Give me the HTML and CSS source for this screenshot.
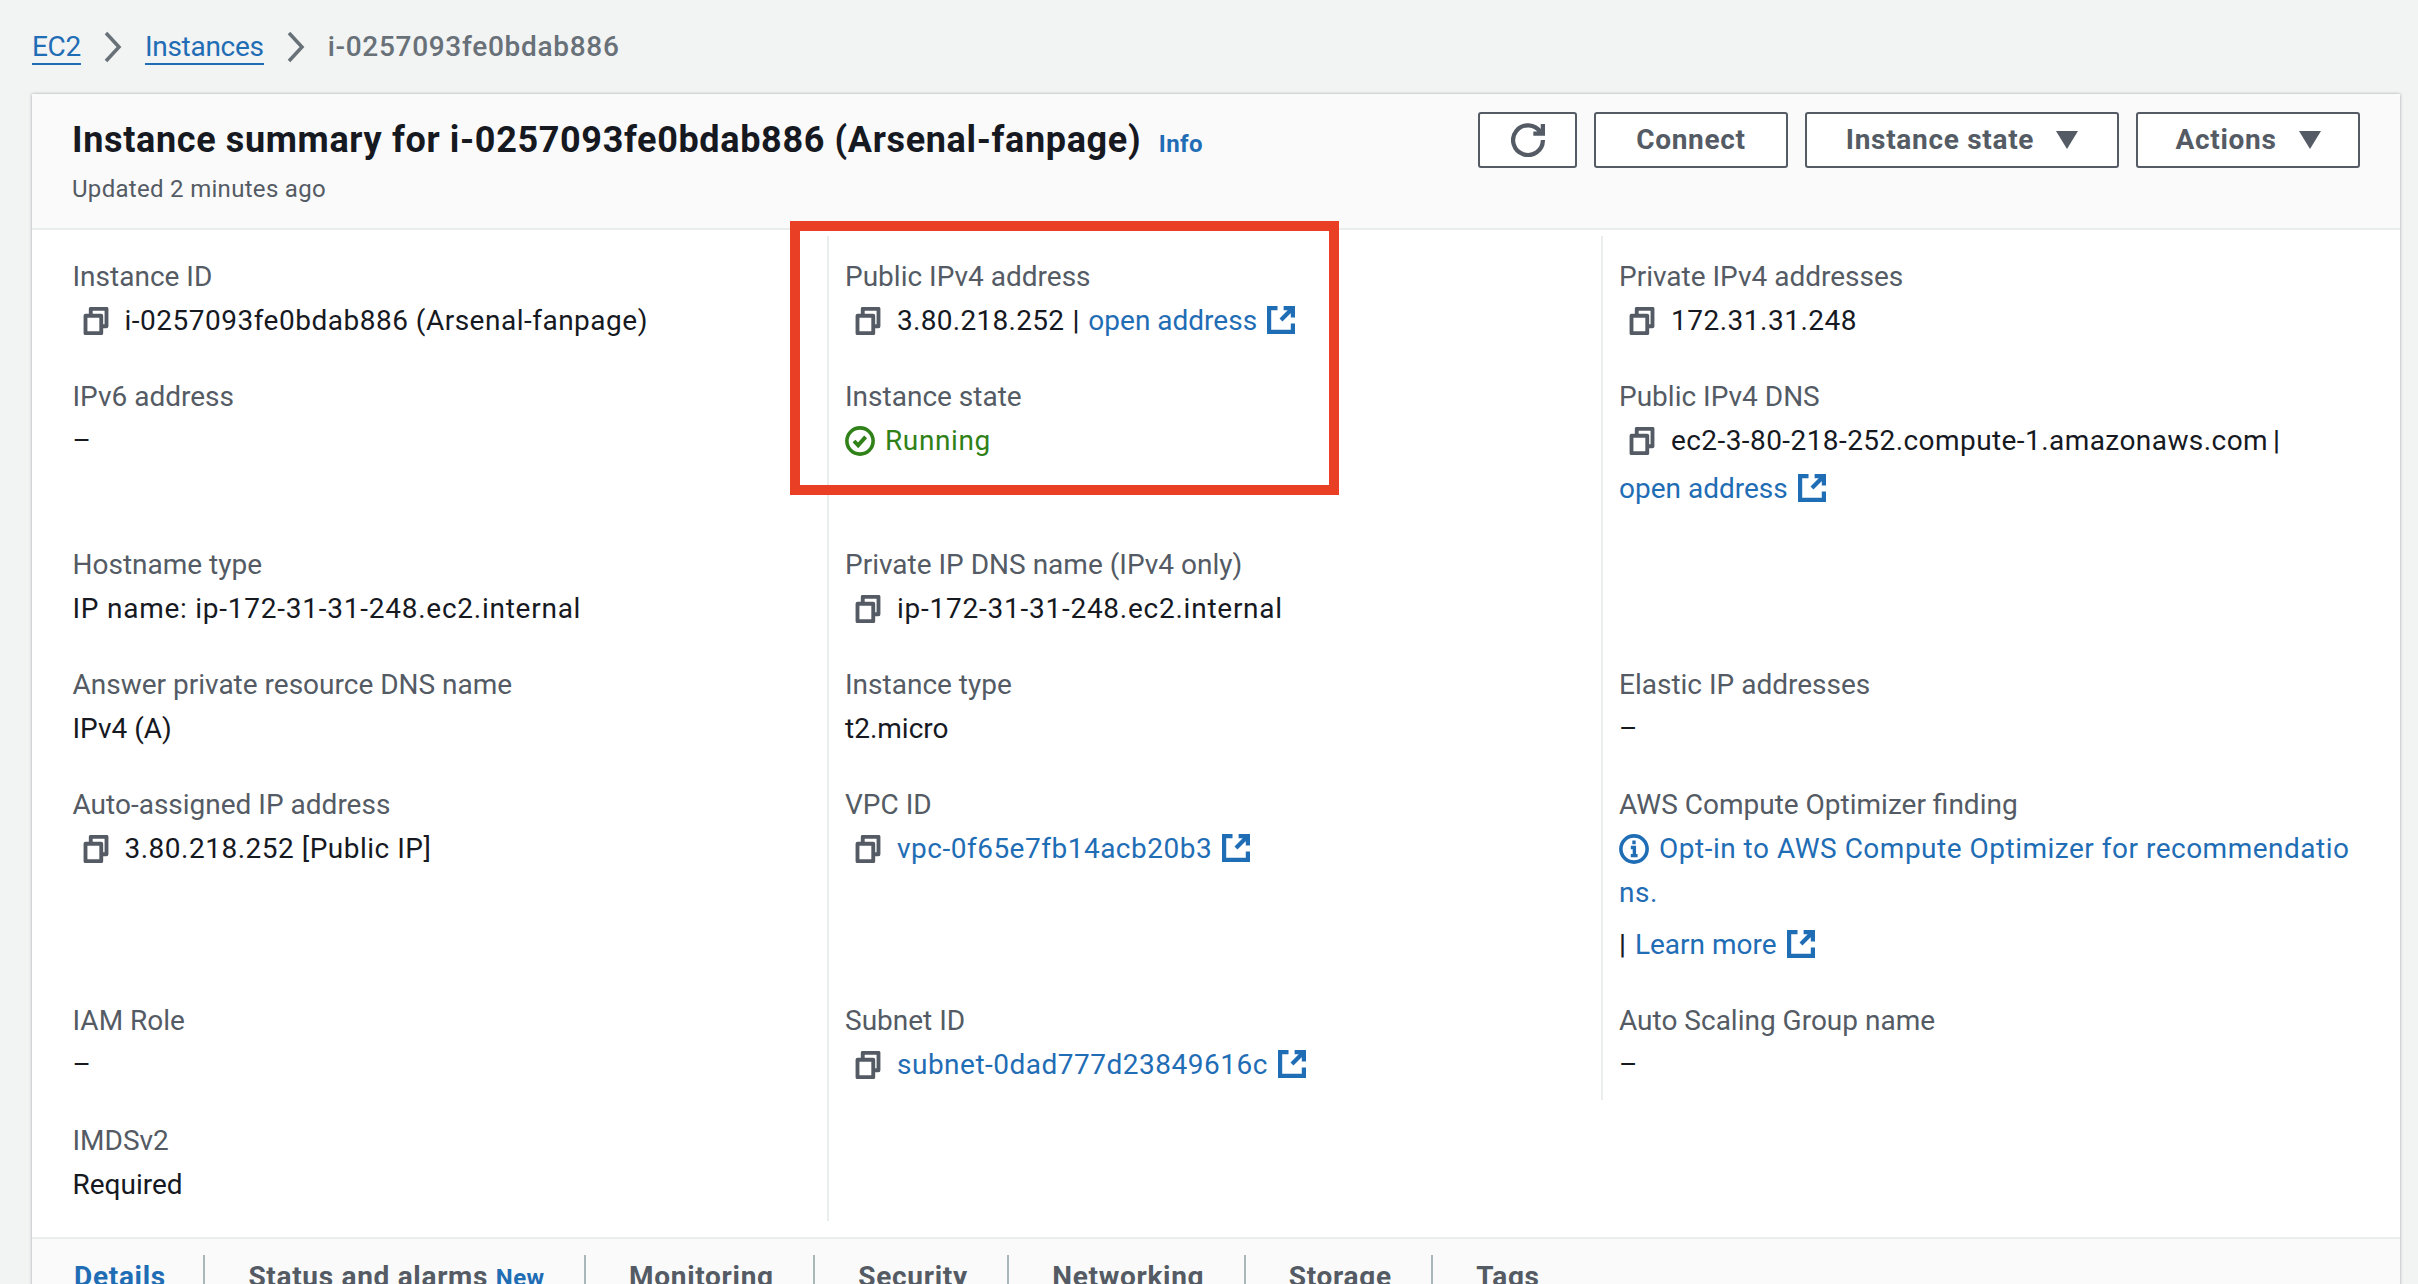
FILE: index.html
```html
<!doctype html>
<html>
<head>
	<title>Instance summary</title>
	<link rel="stylesheet" href="styles.css">
</head>
<body>
	<svg class="defs" width="0" height="0">
		<symbol id="copy" viewBox="0 0 16 16"><path d="M2 5h9v10H2z M5 5V1h9v10h-3" fill="none" stroke="currentColor" stroke-width="2.2" stroke-linejoin="round"/></symbol>
		<symbol id="ext" viewBox="0 0 16 16"><path d="M9.5 1.2h5.3v5.3 M14.8 1.2 8 8 M6 1.2H1.2v13.6h13.6V10" fill="none" stroke="currentColor" stroke-width="2.4"/></symbol>
	</svg>

	<nav class="crumbs">
		<a href="#">EC2</a>
		<svg class="chev" viewBox="0 0 20 32"><path d="M3 2l13 14L3 30" fill="none" stroke="currentColor" stroke-width="3.5"/></svg>
		<a href="#">Instances</a>
		<svg class="chev" viewBox="0 0 20 32"><path d="M3 2l13 14L3 30" fill="none" stroke="currentColor" stroke-width="3.5"/></svg>
		<span>i-0257093fe0bdab886</span>
	</nav>

	<section class="card">
		<header class="head">
			<div class="head-text">
				<h1>Instance summary for i-0257093fe0bdab886 (Arsenal-fanpage) <a class="info" href="#">Info</a></h1>
				<p>Updated 2 minutes ago</p>
			</div>
			<div class="actions">
				<button class="btn btn-icon"><svg viewBox="0 0 16 16"><path d="M10.5 5H15V.5 M15 8a7 7 0 1 1-1.1-3.7" fill="none" stroke="currentColor" stroke-width="2"/></svg></button>
				<button class="btn btn-connect">Connect</button>
				<button class="btn btn-state">Instance state <i class="caret"></i></button>
				<button class="btn btn-actions">Actions <i class="caret"></i></button>
			</div>
		</header>

		<div class="grid">
			<div class="col first">
				<div class="field"><label>Instance ID</label><div class="val id"><svg class="copy"><use href="#copy"/></svg>i-0257093fe0bdab886 (Arsenal-fanpage)</div></div>
				<div class="field tall"><label>IPv6 address</label><div class="val">–</div></div>
				<div class="field"><label>Hostname type</label><div class="val host">IP name: ip-172-31-31-248.ec2.internal</div></div>
				<div class="field"><label>Answer private resource DNS name</label><div class="val">IPv4 (A)</div></div>
				<div class="field taller"><label>Auto-assigned IP address</label><div class="val id"><svg class="copy"><use href="#copy"/></svg>3.80.218.252 [Public IP]</div></div>
				<div class="field"><label>IAM Role</label><div class="val">–</div></div>
				<div class="field last"><label>IMDSv2</label><div class="val">Required</div></div>
			</div>
			<div class="col">
				<div class="field"><label>Public IPv4 address</label><div class="val"><svg class="copy"><use href="#copy"/></svg><span class="ip">3.80.218.252</span> <span class="pipe">|</span> <a href="#">open address<svg class="ext"><use href="#ext"/></svg></a></div></div>
				<div class="field tall"><label>Instance state</label><div class="val running"><svg class="ok" viewBox="0 0 16 16"><circle cx="8" cy="8" r="7" fill="none" stroke="currentColor" stroke-width="1.9"/><path d="M4.8 8l2.2 2.3 4-4.5" fill="none" stroke="currentColor" stroke-width="2.1"/></svg>Running</div></div>
				<div class="field"><label>Private IP DNS name (IPv4 only)</label><div class="val host"><svg class="copy"><use href="#copy"/></svg>ip-172-31-31-248.ec2.internal</div></div>
				<div class="field"><label>Instance type</label><div class="val">t2.micro</div></div>
				<div class="field taller"><label>VPC ID</label><div class="val id"><svg class="copy"><use href="#copy"/></svg><a href="#">vpc-0f65e7fb14acb20b3<svg class="ext"><use href="#ext"/></svg></a></div></div>
				<div class="field last"><label>Subnet ID</label><div class="val id"><svg class="copy"><use href="#copy"/></svg><a href="#">subnet-0dad777d23849616c<svg class="ext"><use href="#ext"/></svg></a></div></div>
			</div>
			<div class="col short">
				<div class="field"><label>Private IPv4 addresses</label><div class="val id"><svg class="copy"><use href="#copy"/></svg>172.31.31.248</div></div>
				<div class="field"><label>Public IPv4 DNS</label><div class="val dns"><svg class="copy"><use href="#copy"/></svg>ec2-3-80-218-252.compute-1.amazonaws.com <span class="pipe">|</span></div><div class="val next"><a href="#">open address<svg class="ext"><use href="#ext"/></svg></a></div></div>
				<div class="field"><label>&nbsp;</label><div class="val">&nbsp;</div></div>
				<div class="field"><label>Elastic IP addresses</label><div class="val">–</div></div>
				<div class="field"><label>AWS Compute Optimizer finding</label><div class="val id"><a href="#"><svg class="inf" viewBox="0 0 16 16"><circle cx="8" cy="8" r="7" fill="none" stroke="currentColor" stroke-width="1.9"/><path d="M8 3.5v2 M6.3 7.2H8.2v4.3 M6.3 11.5h3.6" fill="none" stroke="currentColor" stroke-width="1.8"/></svg>Opt-in to AWS Compute Optimizer for recommendatio<br>ns.</a></div><div class="val next more"><span class="pipe">|</span> <a href="#">Learn more<svg class="ext"><use href="#ext"/></svg></a></div></div>
				<div class="field last"><label>Auto Scaling Group name</label><div class="val">–</div></div>
			</div>
		</div>

		<div class="tabs">
			<a class="tab current" href="#">Details</a>
			<a class="tab" href="#">Status and alarms <em>New</em></a>
			<a class="tab" href="#">Monitoring</a>
			<a class="tab" href="#">Security</a>
			<a class="tab" href="#">Networking</a>
			<a class="tab" href="#">Storage</a>
			<a class="tab" href="#">Tags</a>
		</div>
	</section>

	<div class="callout"></div>
</body>
</html>
```

FILE: styles.css
```css
html, body {margin: 0; height: 100%; overflow: hidden;}
body {background: #f2f3f3; color: #16191f; font-family: Roboto, "Liberation Sans", sans-serif; font-size: 28px; line-height: 44px; position: relative;}
a {color: #1f6db5; text-decoration: none;}
.defs {position: absolute;}

.crumbs {display: flex; align-items: center; height: 94px; padding: 0 0 1px 32px; color: #687078; font-weight: 500; box-sizing: border-box; letter-spacing: .7px;}
.crumbs a {font-weight: 400; border-bottom: 2px solid #1f6db5; line-height: 32px; margin-top: 2px; letter-spacing: -.3px;}
.chev {width: 20px; height: 32px; margin: 0 22px 0 22px;}

.card {margin: 0 18px 0 32px; background: #fff; box-shadow: 0 0 3px rgba(0,28,36,.35);}
.head {display: flex; justify-content: space-between; box-sizing: border-box; height: 136px; padding: 18px 40px 0 40px; background: #fafafa; border-bottom: 2px solid #eaeded;}
h1 {margin: -1px 0 0; font-size: 36px; font-weight: 700; line-height: 58px; letter-spacing: .65px;}
.info {font-size: 24px; margin-left: 8px; letter-spacing: .4px;}
.head-text p {margin: -2px 0 0; font-size: 24px; line-height: 36px; color: #545b64; letter-spacing: .3px;}

.actions {display: flex; gap: 17px;}
.btn {height: 56px; box-sizing: border-box; background: #fff; border: 2px solid #545b64; border-radius: 3px; color: #545b64; font: 700 28px/1 Roboto, sans-serif; letter-spacing: .7px; padding: 0; display: flex; align-items: center; justify-content: center;}
.btn-icon {width: 99px;}
.btn-icon svg {width: 34px; height: 34px;}
.btn-connect {width: 194px;}
.btn-state {width: 314px;}
.btn-actions {width: 224px;}
.caret {width: 0; height: 0; border-left: 11px solid transparent; border-right: 11px solid transparent; border-top: 18px solid #545b64; margin-left: 22px;}

.grid {display: grid; grid-template-columns: repeat(3, 1fr); padding: 6px 25px 16px 21px; height: 1007px; box-sizing: border-box;}
.col {border-left: 2px solid #eaeded; padding: 19px 0 13px 16px; box-sizing: border-box;}
.col.first {border-left-color: transparent; padding-left: 17.5px;}
.col.short {align-self: start;}
.field {padding-bottom: 32px;}
.field.tall {min-height: 136px;}
.field.taller {min-height: 184px;}
.field.last {padding-bottom: 0;}
label {display: block; color: #545b64;}
.val {display: flex; align-items: center; flex-wrap: wrap;}
.val.id {letter-spacing: .5px;}
.val.host {letter-spacing: .75px;}
.val.dns {letter-spacing: .43px;}
.ip {letter-spacing: .3px;}
.next {margin-top: 4px; display: block;}
.next.more {margin-top: 8px;}
.pipe {margin: 0 9px 0 8px; font-weight: 500;}
.dns .pipe {margin-left: 5px;}
.next .pipe {margin: 0 2px 0 0;}
.copy {width: 28px; height: 28px; color: #545b64; margin: 0 15px 0 9px; flex: none;}
.ext {width: 28px; height: 28px; margin-left: 10px; vertical-align: -4px;}
.ok {width: 30px; height: 30px; margin-right: 10px;}
.inf {width: 30px; height: 30px; margin-right: 10px; vertical-align: -6px;}
.running {color: #2f8118; letter-spacing: .6px;}

.tabs {display: flex; background: #fafafa; border-top: 2px solid #eaeded; height: 60px; padding: 16px 0 0 0;}
.tab {font-weight: 700; color: #545b64; padding: 0 39.5px 0 43px; border-left: 2px solid #aab7b8; line-height: 44px; height: 60px; letter-spacing: .7px;}
.tab.current {color: #1f6db5; border-left: 0; padding: 0 37.5px 0 42px;}
.tab em {font-style: normal; color: #1f6db5; font-size: 24px; letter-spacing: .4px;}

/* red annotation box drawn over the card */
.callout {position: absolute; left: 790px; top: 221px; width: 549px; height: 274px; box-sizing: border-box; border: 10px solid #e93f25;}
```
